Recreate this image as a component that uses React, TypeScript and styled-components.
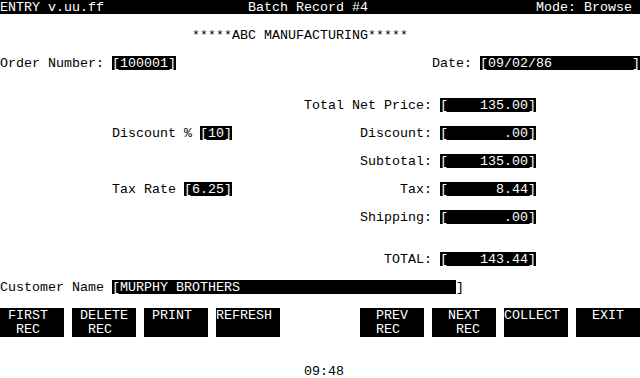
import React from "react";
import styled, { createGlobalStyle } from "styled-components";

const GlobalStyle = createGlobalStyle`
    html, body {
        margin: 0;
        padding: 0;
        background: #fff;
    }
`;

// 80 columns x 27 rows, each cell 8 x 14 px
const Screen = styled.div`
    width: 640px;
    height: 378px;
    overflow: hidden;
    background: #fff;
    color: #000;
    font-family: "Liberation Mono", "DejaVu Sans Mono", monospace;
    font-size: 13.333px;
    line-height: 14px;
    display: flex;
    flex-direction: column;
`;

const Line = styled.div<{ $inverse?: boolean }>`
    height: 14px;
    display: grid;
    grid-template-columns: repeat(80, 8px);
    white-space: pre;
    background: ${(p) => (p.$inverse ? "#000" : "transparent")};
    color: ${(p) => (p.$inverse ? "#fff" : "#000")};
`;

const Blank = styled.div<{ $rows: number }>`
    height: ${(p) => p.$rows * 14}px;
    flex: none;
`;

const Text = styled.span<{ $field?: boolean }>`
    display: block;
    height: 14px;
    padding-top: 1px;
    box-sizing: border-box;
    background: ${(p) => (p.$field ? "#000" : "transparent")};
    color: ${(p) => (p.$field ? "#fff" : "inherit")};
`;

const ButtonBar = styled.div`
    display: grid;
    grid-template-columns: repeat(9, 64px);
    column-gap: 8px;
    height: 28px;
`;

const Key = styled.div`
    background: #000;
    color: #fff;
    white-space: pre;
    padding-top: 1px;
    box-sizing: border-box;
`;

function At(props: { col: number; text: string; field?: boolean }) {
    return (
        <Text
            $field={props.field}
            style={{ gridColumn: `${props.col + 1} / span ${props.text.length}` }}
        >
            {props.text}
        </Text>
    );
}

const keys: (string | null)[] = [
    " FIRST\n  REC",
    " DELETE\n  REC",
    " PRINT",
    "REFRESH",
    null,
    "  PREV\n  REC",
    "  NEXT\n   REC",
    "COLLECT",
    "  EXIT",
];

export default function App() {
    return (
        <>
            <GlobalStyle />
            <Screen>
                <Line $inverse>
                    <At col={0} text="ENTRY v.uu.ff" />
                    <At col={31} text="Batch Record #4" />
                    <At col={67} text="Mode: Browse" />
                </Line>
                <Blank $rows={1} />
                <Line>
                    <At col={24} text="*****ABC MANUFACTURING*****" />
                </Line>
                <Blank $rows={1} />
                <Line>
                    <At col={0} text="Order Number: " />
                    <At col={14} text="[100001]" field />
                    <At col={54} text="Date: " />
                    <At col={60} text="[09/02/86          ]" field />
                </Line>
                <Blank $rows={2} />
                <Line>
                    <At col={38} text="Total Net Price: " />
                    <At col={55} text="[    135.00]" field />
                </Line>
                <Blank $rows={1} />
                <Line>
                    <At col={14} text="Discount % " />
                    <At col={25} text="[10]" field />
                    <At col={45} text="Discount: " />
                    <At col={55} text="[       .00]" field />
                </Line>
                <Blank $rows={1} />
                <Line>
                    <At col={45} text="Subtotal: " />
                    <At col={55} text="[    135.00]" field />
                </Line>
                <Blank $rows={1} />
                <Line>
                    <At col={14} text="Tax Rate " />
                    <At col={23} text="[6.25]" field />
                    <At col={50} text="Tax: " />
                    <At col={55} text="[      8.44]" field />
                </Line>
                <Blank $rows={1} />
                <Line>
                    <At col={45} text="Shipping: " />
                    <At col={55} text="[       .00]" field />
                </Line>
                <Blank $rows={2} />
                <Line>
                    <At col={48} text="TOTAL: " />
                    <At col={55} text="[    143.44]" field />
                </Line>
                <Blank $rows={1} />
                <Line>
                    <At col={0} text="Customer Name " />
                    <At col={14} text={"[MURPHY BROTHERS" + " ".repeat(27)} field />
                    <At col={57} text="]" />
                </Line>
                <Blank $rows={1} />
                <ButtonBar>
                    {keys.map((k, i) =>
                        k ? <Key key={i}>{k}</Key> : <div key={i} />
                    )}
                </ButtonBar>
                <Blank $rows={2} />
                <Line>
                    <At col={38} text="09:48" />
                </Line>
            </Screen>
        </>
    );
}
